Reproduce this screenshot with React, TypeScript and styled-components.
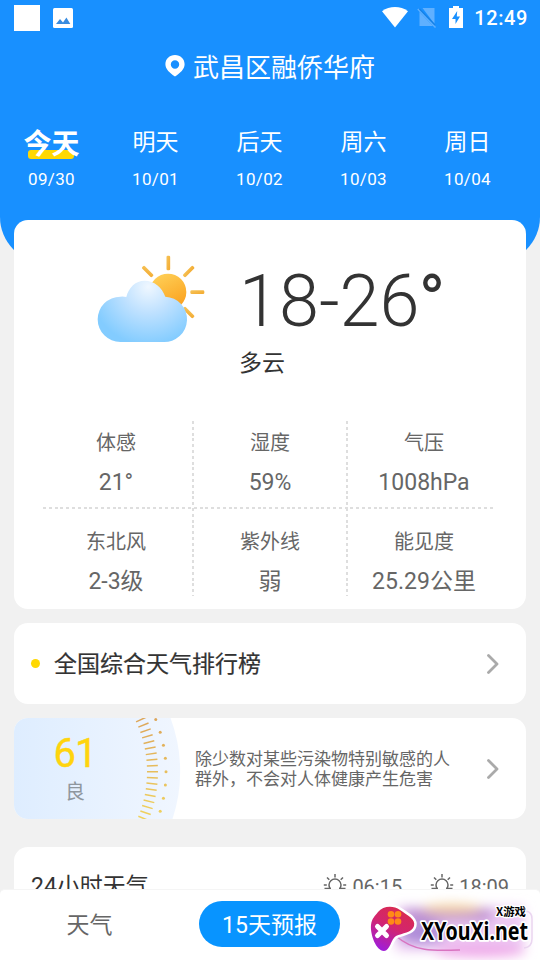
import React from 'react';
import styled, { createGlobalStyle } from 'styled-components';

const GlobalStyle = createGlobalStyle`
  * { box-sizing: border-box; }
  body {
    margin: 0;
    background: #f1f1f1;
    font-family: Roboto, "Noto Sans CJK SC", sans-serif;
  }
  svg { display: block; flex: none; }
`;

const Screen = styled.div`
  position: relative;
  display: flex;
  flex-direction: column;
  width: 540px;
  height: 960px;
  overflow: hidden;
  background: #f1f1f1;
`;

const Content = styled.main`
  display: flex;
  flex-direction: column;
  height: 889px;
  overflow: hidden;
`;

const Header = styled.header`
  flex: none;
  height: 263px;
  border-radius: 0 0 46px 46px;
  background: #1890ff;
  color: #fff;
`;

const StatusBar = styled.div`
  display: flex;
  align-items: center;
  height: 36px;
  padding: 0 12px 0 14px;
`;

const Notice = styled.span`
  width: 26px;
  height: 26px;
  margin-right: 13px;
  background: #fff;
`;

const StatusIcons = styled.div`
  display: flex;
  align-items: center;
  margin-left: auto;
  svg { margin-bottom: 2px; }
`;

const Clock = styled.span`
  margin-left: 11px;
  font-size: 20px;
  font-weight: 500;
  line-height: 38px;
  letter-spacing: 0.6px;
`;

const Location = styled.h1`
  display: flex;
  align-items: center;
  justify-content: center;
  gap: 8px;
  height: 60px;
  margin: 0;
  font-size: 26px;
  font-weight: 400;
  line-height: 60px;
`;

const Place = styled.span`
  padding-top: 3px;
`;

const DayTabs = styled.nav`
  display: grid;
  grid-template-columns: repeat(5, 104px);
  margin: 29px 0 0 -0.5px;
`;

const DayTab = styled.div`
  display: flex;
  flex-direction: column;
  align-items: center;
`;

const DayName = styled.span<{ $active?: boolean }>`
  position: relative;
  z-index: 0;
  height: 34px;
  font-size: ${(p) => (p.$active ? '28px' : '23px')};
  font-weight: ${(p) => (p.$active ? 700 : 400)};
  line-height: ${(p) => (p.$active ? '40px' : '35px')};

  &::before {
    content: '';
    display: ${(p) => (p.$active ? 'block' : 'none')};
    position: absolute;
    z-index: -1;
    left: 5px;
    top: 25px;
    width: 46px;
    height: 9px;
    border-radius: 3px;
    background: #ffd802;
  }
`;

const DayDate = styled.span`
  margin-top: 10px;
  font-size: 17px;
  line-height: 20px;
  letter-spacing: 0.35px;
`;

const Card = styled.section`
  flex: none;
  margin: 0 14px 14px;
  border-radius: 14px;
  background: #fff;
  overflow: hidden;
`;

const WeatherCard = styled(Card)`
  height: 389px;
  margin-top: -43px;
`;

const Summary = styled.div`
  display: flex;
  height: 201px;
  padding: 25px 0 0 66px;
`;

const Reading = styled.div`
  padding-left: 19px;
`;

const Temperature = styled.div`
  height: 100px;
  margin-top: 6px;
  font-size: 72px;
  font-weight: 300;
  line-height: 102px;
  white-space: nowrap;
  color: #333;
`;

const Degree = styled.span`
  margin-left: -1px;
  font-weight: 400;
`;

const Condition = styled.div`
  font-size: 23px;
  line-height: 26px;
  color: #333;
`;

const dash = '#dedede 0 3px, transparent 3px 5.8px';

const Metrics = styled.div`
  display: grid;
  grid-template-columns: repeat(3, 154px);
  grid-template-rows: 87px 87px;
  margin-left: 25px;
  height: 175px;
  background:
    repeating-linear-gradient(180deg, ${dash}) 153px 0 / 2px 100% no-repeat,
    repeating-linear-gradient(180deg, ${dash}) 307px 0 / 2px 100% no-repeat,
    repeating-linear-gradient(90deg, ${dash}) 4px 86px / 452px 2px no-repeat;
`;

const Metric = styled.div<{ $lower: boolean }>`
  display: flex;
  flex-direction: column;
  align-items: center;
  padding-top: ${(p) => (p.$lower ? '19px' : '7px')};
  color: #666;
`;

const MetricLabel = styled.span`
  font-size: 20px;
  line-height: 30px;
`;

const MetricValue = styled.span`
  margin-top: 10px;
  font-size: 23px;
  line-height: 30px;
`;

const RankingCard = styled(Card)`
  display: flex;
  align-items: center;
  height: 81px;
  padding: 0 27px 0 17px;
`;

const Bullet = styled.i`
  width: 9px;
  height: 9px;
  border-radius: 50%;
  background: #ffd802;
`;

const RankingTitle = styled.h2`
  flex: 1;
  margin: 2px 0 0 14px;
  font-size: 23px;
  font-weight: 400;
  line-height: 34px;
  -webkit-text-stroke: 0.2px #333;
  color: #333;
`;

const AirCard = styled(Card)`
  display: flex;
  align-items: center;
  height: 101px;
  margin-bottom: 28px;
  padding-right: 27px;
`;

const AirGauge = styled.div`
  position: relative;
  width: 168px;
  height: 101px;
  > svg { position: absolute; inset: 0; }
`;

const AirScore = styled.div`
  position: relative;
  display: flex;
  flex-direction: column;
  align-items: center;
  width: 122px;
  padding-top: 11px;
`;

const AirIndex = styled.span`
  font-size: 40px;
  line-height: 50px;
  letter-spacing: -1px;
  -webkit-text-stroke: 0.4px #ffd40d;
  color: #ffd40d;
`;

const AirLevel = styled.span`
  margin-top: 1px;
  font-size: 20px;
  line-height: 24px;
  color: #8f979e;
`;

const AirAdvice = styled.p`
  flex: 1;
  margin: 1px 0 0 13px;
  font-size: 17px;
  line-height: 20px;
  white-space: pre-line;
  color: #666;
`;

const HourlyCard = styled(Card)`
  display: flex;
  height: 90px;
  margin-bottom: 0;
  padding: 24px 17px 0;
`;

const HourlyTitle = styled.h2`
  flex: 1;
  margin: 1px 0 0;
  font-size: 23px;
  font-weight: 400;
  line-height: 30px;
  color: #333;
`;

const SunTime = styled.span`
  display: flex;
  gap: 5px;
  margin-left: 28px;
  font-size: 20px;
  line-height: 33px;
  color: #666;
  svg { margin-top: 2px; }
`;

const BottomNav = styled.nav`
  display: grid;
  grid-template-columns: 179px 181px 180px;
  align-items: center;
  justify-items: center;
  height: 71px;
  padding-bottom: 2px;
  border-top: 1px solid #f5f5f5;
  border-radius: 5px 5px 0 0;
  background: #fff;
`;

const NavItem = styled.span<{ $active?: boolean }>`
  width: 141px;
  height: 46px;
  border-radius: 23px;
  font-size: 23px;
  line-height: 50px;
  text-align: center;
  color: ${(p) => (p.$active ? '#fff' : '#666')};
  background: ${(p) => (p.$active ? '#0894ff' : 'transparent')};
`;

const Watermark = styled.div`
  position: absolute;
  right: 0;
  bottom: 0;
  width: 180px;
  height: 71px;
  overflow: hidden;
`;

const PictureIcon = () => (
  <svg width="20" height="20" viewBox="0 0 20 20">
    <rect width="20" height="20" rx="1.500" fill="#fff" />
    <path d="M3 16l4-5 3 3.400 3.400-4.800L17.300 16z" fill="#398ce0" />
  </svg>
);

const PinIcon = () => (
  <svg width="20" height="22" viewBox="0 0 20 22">
    <path
      fillRule="evenodd"
      fill="#fff"
      d="M10 0C4.500 0 .4 4 .4 9.300c0 5 4.300 8.600 9.600 12.300 5.300-3.700 9.600-7.300 9.600-12.300C19.600 4 15.500 0 10 0zm0 5.300a4.200 4.200 0 1 1 0 8.400 4.200 4.200 0 0 1 0-8.400z"
    />
  </svg>
);

const WifiIcon = () => (
  <svg width="26" height="21" viewBox="0 0 26 21">
    <path d="M0 4.200C7.500-1.300 18.500-1.300 26 4.200L13 20.500z" fill="#fff" />
  </svg>
);

const IconSlot = styled.span<{ $gap: number }>`
  margin-left: ${(p) => p.$gap}px;
`;

const NoSimIcon = () => (
  <svg width="20" height="22" viewBox="0 0 20 22">
    <path d="M5.500 2H17.500v16zM2.500 6L16 20H2.500z" fill="#5fb0ff" />
    <path d="M.8 3L18.500 21.500" stroke="#5fb0ff" strokeWidth="1.500" />
    <path d="M2.500 3L18 19" stroke="#1782e6" strokeWidth="1.200" />
  </svg>
);

const BatteryIcon = () => (
  <svg width="14" height="22" viewBox="0 0 14 22">
    <path d="M4 0h6v2h4v20H0V2h4z" fill="#fff" />
    <path d="M8.200 5L3 13h3.500v5L11 10.500H7.800z" fill="#1890ff" />
  </svg>
);

const Chevron = () => (
  <svg width="13" height="20" viewBox="0 0 13 20">
    <path d="M2.500 1.500L11 10L2.500 18.500" fill="none" stroke="#aaa" strokeWidth="2.800" strokeLinecap="round" strokeLinejoin="round" />
  </svg>
);

const SunHorizonIcon = () => (
  <svg width="24" height="24" viewBox="0 0 24 24" fill="none" stroke="#666" strokeWidth="1.500">
    <path d="M7.500 16A6 6 0 1 1 16.500 16M12 1v3.500M4 4.500l2.300 2.300M20 4.500L17.700 6.800M.8 12h3M20.200 12h3M1.500 15.500h6.500M16 15.500h6.500" />
  </svg>
);

const CloudySunIcon = () => (
  <svg width="140" height="110" viewBox="0 0 420 330">
    <defs>
      <linearGradient id="sun" x1="0" y1="0" x2="0.5" y2="1">
        <stop offset="0" stopColor="#ffd45c" />
        <stop offset="1" stopColor="#fba422" />
      </linearGradient>
      <linearGradient id="ray" x1="0" y1="0" x2="1" y2="1">
        <stop offset="0" stopColor="#f6c45a" />
        <stop offset="1" stopColor="#f3a92e" />
      </linearGradient>
      <radialGradient id="cloud" gradientUnits="userSpaceOnUse" cx="205" cy="125" r="175">
        <stop offset="0" stopColor="#eff7ff" />
        <stop offset="0.45" stopColor="#bfe1ff" />
        <stop offset="1" stopColor="#83ccff" />
      </radialGradient>
    </defs>
    <g fill="url(#ray)">
      <rect x="259.500" y="32" width="11" height="44" rx="4" />
      <rect x="331" y="136" width="42" height="11" rx="4" />
      <rect x="182" y="74" width="42" height="11" rx="4" transform="rotate(45 203 79.500)" />
      <rect x="305" y="74" width="42" height="11" rx="4" transform="rotate(-45 326 79.500)" />
      <rect x="305" y="197" width="42" height="11" rx="4" transform="rotate(45 326 202.500)" />
    </g>
    <circle cx="264" cy="141" r="55" fill="url(#sun)" />
    <path
      d="M121 155A68 68 0 0 0 121 291H250A68 68 0 0 0 256 155C246 127 222 107 194 107C167 107 146 127 139 156Q130 154 121 155z"
      fill="url(#cloud)"
    />
  </svg>
);

const polar = (radius: number, degrees: number) => {
  const a = (degrees * Math.PI) / 180;
  return [14 + radius * Math.cos(a), 53.7 + radius * Math.sin(a)];
};

const ticks = Array.from({ length: 19 }, (_, i) => (i - 9) * 2.75);
const dots = Array.from({ length: 8 }, (_, i) => (i - 4) * 5.55);

const GaugeArc = () => (
  <svg width="168" height="101" viewBox="0 0 168 101">
    <defs>
      <linearGradient id="air">
        <stop offset="0" stopColor="#deedff" />
        <stop offset="1" stopColor="#f0f6ff" />
      </linearGradient>
      <linearGradient id="scale" gradientUnits="userSpaceOnUse" x1="0" y1="0" x2="0" y2="101">
        <stop offset="0" stopColor="#dda65a" />
        <stop offset="1" stopColor="#f0d35e" />
      </linearGradient>
    </defs>
    <path d="M0 0H156.500A152 152 0 0 1 158.500 101H0z" fill="url(#air)" />
    {ticks.map((t) => {
      const [x1, y1] = polar(119, t);
      const [x2, y2] = polar(130, t);
      return <path key={t} d={`M${x1} ${y1}L${x2} ${y2 + 0.01}`} stroke="url(#scale)" strokeWidth="1.500" />;
    })}
    {dots.map((t) => {
      const [cx, cy] = polar(138, t);
      return <circle key={t} cx={cx} cy={cy} r="1.500" fill="url(#scale)" />;
    })}
  </svg>
);

const SiteLogo = () => (
  <svg width="180" height="71" viewBox="0 0 180 71">
    <defs>
      <filter id="haze" x="-30%" y="-60%" width="160%" height="220%">
        <feGaussianBlur stdDeviation="6" />
      </filter>
      <linearGradient id="pad" x1="0.7" y1="0" x2="0.2" y2="1">
        <stop offset="0" stopColor="#d92b4f" />
        <stop offset="0.45" stopColor="#d3256f" />
        <stop offset="1" stopColor="#9c1de0" />
      </linearGradient>
    </defs>
    <g filter="url(#haze)">
      <rect x="36" y="18" width="128" height="44" fill="#ecc9f3" />
      <rect x="44" y="20" width="88" height="12" fill="#b98ad0" />
      <ellipse cx="92" cy="20" rx="30" ry="5" fill="#f3cf9f" />
      <ellipse cx="62" cy="44" rx="24" ry="11" fill="#ad8bd8" />
      <ellipse cx="120" cy="62" rx="46" ry="6" fill="#efa5e8" />
    </g>
    <path d="M36 47C54 63 74 62 100 61" fill="none" stroke="#d974c0" strokeWidth="1.500" />
    <path d="M166 22q6 1 6 8v20q0 8-8 9" fill="none" stroke="#ead5f0" strokeWidth="1.500" />
    <path
      d="M18 23C23 17 33 16 40 21C47 26 56 30 54 37C52 44 42 44 36 47C31 50 30 62 24 62C16 62 10 45 11 36C12 29 15 27 18 23z"
      fill="url(#pad)"
      stroke="#fff"
      strokeWidth="5"
      strokeLinejoin="round"
      paintOrder="stroke"
    />
    <g fill="#ff8a17">
      <circle cx="31" cy="25.200" r="3.300" />
      <circle cx="38" cy="25.200" r="3.300" />
      <circle cx="31" cy="32.500" r="3.300" />
      <circle cx="38" cy="32.500" r="3.300" />
    </g>
    <path d="M17.500 37.500l9 9M26.500 37.500l-9 9" stroke="#fff" strokeWidth="5" strokeLinecap="round" />
    <g fill="#000" stroke="#fff" strokeLinejoin="round" paintOrder="stroke">
      <text x="136" y="27" fontFamily='"Noto Sans CJK SC", sans-serif' fontSize="11" fontWeight="700" strokeWidth="2.500" textLength="30" lengthAdjust="spacingAndGlyphs">
        X游戏
      </text>
      <text x="61" y="51" fontFamily='"Noto Sans", sans-serif' fontSize="25" fontWeight="700" strokeWidth="3.500" textLength="107" lengthAdjust="spacingAndGlyphs">
        XYouXi.net
      </text>
    </g>
  </svg>
);

const days = [
  { name: '今天', date: '09/30' },
  { name: '明天', date: '10/01' },
  { name: '后天', date: '10/02' },
  { name: '周六', date: '10/03' },
  { name: '周日', date: '10/04' },
];

const metrics = [
  ['体感', '21°'],
  ['湿度', '59%'],
  ['气压', '1008hPa'],
  ['东北风', '2-3级'],
  ['紫外线', '弱'],
  ['能见度', '25.29公里'],
];

export default function App() {
  return (
    <Screen>
      <GlobalStyle />
      <Content>
        <Header>
          <StatusBar>
            <Notice />
            <PictureIcon />
            <StatusIcons>
              <WifiIcon />
              <IconSlot $gap={9}>
                <NoSimIcon />
              </IconSlot>
              <IconSlot $gap={12}>
                <BatteryIcon />
              </IconSlot>
              <Clock>12:49</Clock>
            </StatusIcons>
          </StatusBar>
          <Location>
            <PinIcon />
            <Place>武昌区融侨华府</Place>
          </Location>
          <DayTabs>
            {days.map((d, i) => (
              <DayTab key={d.date}>
                <DayName $active={i === 0}>{d.name}</DayName>
                <DayDate>{d.date}</DayDate>
              </DayTab>
            ))}
          </DayTabs>
        </Header>

        <WeatherCard>
          <Summary>
            <CloudySunIcon />
            <Reading>
              <Temperature>
                18-26<Degree>°</Degree>
              </Temperature>
              <Condition>多云</Condition>
            </Reading>
          </Summary>
          <Metrics>
            {metrics.map(([label, value], i) => (
              <Metric key={label} $lower={i > 2}>
                <MetricLabel>{label}</MetricLabel>
                <MetricValue>{value}</MetricValue>
              </Metric>
            ))}
          </Metrics>
        </WeatherCard>

        <RankingCard>
          <Bullet />
          <RankingTitle>全国综合天气排行榜</RankingTitle>
          <Chevron />
        </RankingCard>

        <AirCard>
          <AirGauge>
            <GaugeArc />
            <AirScore>
              <AirIndex>61</AirIndex>
              <AirLevel>良</AirLevel>
            </AirScore>
          </AirGauge>
          <AirAdvice>{'除少数对某些污染物特别敏感的人\n群外，不会对人体健康产生危害'}</AirAdvice>
          <Chevron />
        </AirCard>

        <HourlyCard>
          <HourlyTitle>24小时天气</HourlyTitle>
          <SunTime>
            <SunHorizonIcon />
            06:15
          </SunTime>
          <SunTime>
            <SunHorizonIcon />
            18:09
          </SunTime>
        </HourlyCard>
      </Content>

      <BottomNav>
        <NavItem>天气</NavItem>
        <NavItem $active>15天预报</NavItem>
      </BottomNav>
      <Watermark>
        <SiteLogo />
      </Watermark>
    </Screen>
  );
}
